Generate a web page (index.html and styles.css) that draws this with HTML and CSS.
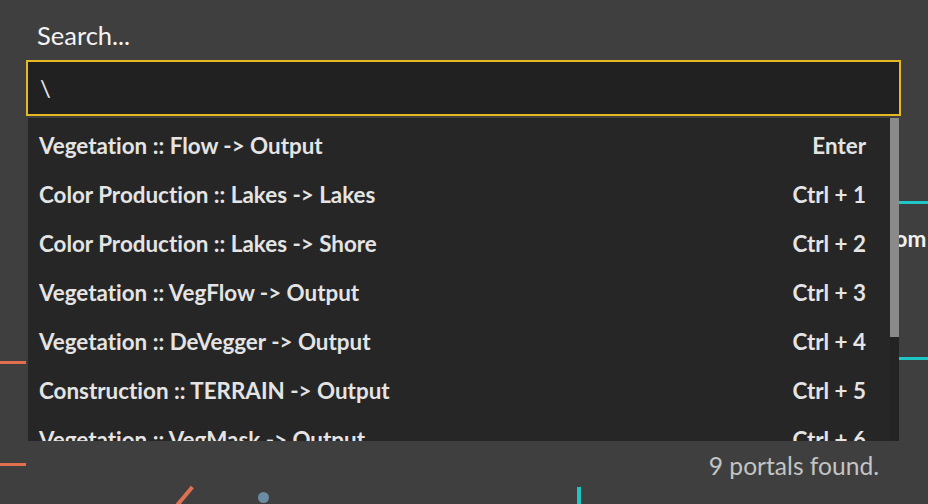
FILE: index.html
```html
<!DOCTYPE html>
<html>
<head>
<meta charset="utf-8">
<link rel="stylesheet" href="styles.css">
</head>
<body>
<div class="canvas">
  <div class="wire wire-orange w1"></div>
  <div class="wire wire-orange w2"></div>
  <div class="wire wire-teal t1"></div>
  <div class="wire wire-teal t2"></div>
  <div class="node-label">Custom</div>
  <div class="slash"></div>
  <div class="dot"></div>
  <div class="wire-teal vline"></div>
</div>
<div class="palette">
  <div class="label">Search...</div>
  <div class="input">\</div>
  <div class="results">
    <div class="rows">
      <div class="row"><span>Vegetation :: Flow -&gt; Output</span><span>Enter</span></div>
      <div class="row"><span>Color Production :: Lakes -&gt; Lakes</span><span>Ctrl + 1</span></div>
      <div class="row"><span>Color Production :: Lakes -&gt; Shore</span><span>Ctrl + 2</span></div>
      <div class="row"><span>Vegetation :: VegFlow -&gt; Output</span><span>Ctrl + 3</span></div>
      <div class="row"><span>Vegetation :: DeVegger -&gt; Output</span><span>Ctrl + 4</span></div>
      <div class="row"><span>Construction :: TERRAIN -&gt; Output</span><span>Ctrl + 5</span></div>
      <div class="row"><span>Vegetation :: VegMask -&gt; Output</span><span>Ctrl + 6</span></div>
    </div>
    <div class="scrollbar"><div class="thumb"></div></div>
  </div>
  <div class="status">9 portals found.</div>
</div>
</body>
</html>
```
FILE: styles.css
```css
html, body {
  margin: 0;
  padding: 0;
}
body {
  width: 928px;
  height: 504px;
  overflow: hidden;
  background: #3f3f3f;
  position: relative;
  font-family: Lato, "Noto Sans", sans-serif;
  font-variant-ligatures: none;
  color: #e6e6e6;
}
.canvas {
  position: absolute;
  inset: 0;
}
.wire {
  position: absolute;
  height: 3px;
}
.wire-orange { background: #e0704f; }
.wire-teal { background: #1fc6c6; }
.w1 { left: 0; top: 361px; width: 26px; }
.w2 { left: 0; top: 463px; width: 26px; }
.t1 { left: 880px; top: 201px; width: 48px; }
.t2 { left: 880px; top: 357px; width: 48px; }
.node-label {
  position: absolute;
  left: 849px;
  top: 225px;
  font-size: 22.5px;
  font-weight: 700;
  color: #f2f2f2;
  white-space: nowrap;
}
.slash {
  position: absolute;
  left: 182px;
  top: 484px;
  width: 4px;
  height: 26px;
  background: #e0704f;
  transform: rotate(40deg);
}
.dot {
  position: absolute;
  left: 258px;
  top: 492px;
  width: 11px;
  height: 11px;
  border-radius: 50%;
  background: #6b8ca2;
}
.vline {
  position: absolute;
  left: 577px;
  top: 487px;
  width: 4px;
  height: 20px;
}
.palette {
  position: relative;
  margin-left: 26px;
  width: 875px;
  padding-top: 19px;
}
.label {
  padding-left: 11px;
  font-size: 25.5px;
  line-height: 32px;
  height: 32px;
  color: #f4f4f4;
  margin-bottom: 9px;
}
.input {
  box-sizing: border-box;
  height: 56px;
  border: 2px solid #e8b824;
  background: #212121;
  padding-left: 12px;
  font-size: 24px;
  line-height: 52px;
  color: #e6e6e6;
}
.results {
  margin: 2px 2px 0;
  height: 323px;
  background: #262626;
  display: flex;
  overflow: hidden;
}
.rows {
  flex: 1;
  padding-top: 3px;
}
.row {
  display: flex;
  justify-content: space-between;
  height: 49px;
  line-height: 49px;
  padding: 0 24px 0 11px;
  font-size: 22.4px;
  font-weight: 700;
  color: #e4e4e4;
  white-space: nowrap;
}
.scrollbar {
  width: 9px;
  background: #232323;
}
.thumb {
  height: 219px;
  background: #8a8a8a;
}
.status {
  text-align: right;
  padding-right: 22px;
  padding-top: 10px;
  font-size: 24.6px;
  color: #c4c4c4;
}
```
